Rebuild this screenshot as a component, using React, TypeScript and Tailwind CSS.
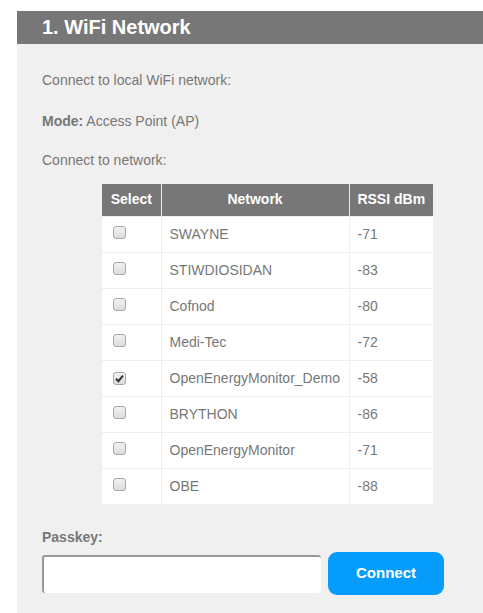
import React from 'react';

interface Network {
  ssid: string;
  rssi: number;
  selected?: boolean;
}

const networks: Network[] = [
  { ssid: 'SWAYNE', rssi: -71 },
  { ssid: 'STIWDIOSIDAN', rssi: -83 },
  { ssid: 'Cofnod', rssi: -80 },
  { ssid: 'Medi-Tec', rssi: -72 },
  { ssid: 'OpenEnergyMonitor_Demo', rssi: -58, selected: true },
  { ssid: 'BRYTHON', rssi: -86 },
  { ssid: 'OpenEnergyMonitor', rssi: -71 },
  { ssid: 'OBE', rssi: -88 },
];

function Checkbox({ checked }: { checked?: boolean }) {
  return (
    <span className="inline-flex w-[13px] h-[13px] items-center justify-center rounded-[3px] border border-[#a9a9a9] bg-gradient-to-b from-[#f2f2f2] to-[#dcdcdc]">
      {checked && (
        <svg width="9" height="9" viewBox="0 0 9 9">
          <path d="M1 4.8 L3.4 7.2 L8 1.6" fill="none" stroke="#333" strokeWidth="2" />
        </svg>
      )}
    </span>
  );
}

export default function App() {
  return (
    <div className="min-h-[613px] bg-white pt-[11px] pl-[17px] font-['Liberation_Sans',Arial,sans-serif] text-[14px] text-[#777]">
      <div className="bg-[#f0f0f0] min-h-[602px]">
        <div className="h-[33px] bg-[#777] pl-[25px] flex items-center">
          <h2 className="text-[20px] font-bold text-white leading-none -mt-[2px]">1. WiFi Network</h2>
        </div>

        <div className="px-[25px] pt-[28px] pb-[20px]">
          <p className="leading-4">Connect to local WiFi network:</p>
          <p className="leading-4 mt-[25px]">
            <b>Mode:</b> Access Point (AP)
          </p>
          <p className="leading-4 mt-[23px]">Connect to network:</p>

          <table className="ml-[60px] mt-[16px] w-[331px] border-collapse bg-white">
            <thead>
              <tr className="h-[32px] bg-[#777] text-white font-bold">
                <th className="w-[59px] border-r border-[#eee] text-center">Select</th>
                <th className="w-[188px] border-r border-[#eee] text-center">Network</th>
                <th className="text-center">RSSI dBm</th>
              </tr>
            </thead>
            <tbody>
              {networks.map((n) => (
                <tr key={n.ssid} className="h-[36px] border-t border-[#eee]">
                  <td className="border-r border-[#eee] pl-[11px] align-middle">
                    <span className="inline-flex pt-[2px]">
                      <Checkbox checked={n.selected} />
                    </span>
                  </td>
                  <td className="border-r border-[#eee] pl-[8px]">{n.ssid}</td>
                  <td className="pl-[8px]">{n.rssi}</td>
                </tr>
              ))}
            </tbody>
          </table>

          <p className="leading-4 mt-[25px] font-bold">Passkey:</p>
          <div className="flex items-center gap-[7px] mt-[7px]">
            <input
              type="password"
              className="w-[279px] h-[38px] bg-white rounded-[3px] border-t-2 border-l-2 border-t-[#999] border-l-[#999] outline-none"
            />
            <button className="w-[116px] h-[43px] rounded-[9px] bg-[#069cfb] text-white font-bold text-[15px]">
              Connect
            </button>
          </div>
        </div>
      </div>
    </div>
  );
}
